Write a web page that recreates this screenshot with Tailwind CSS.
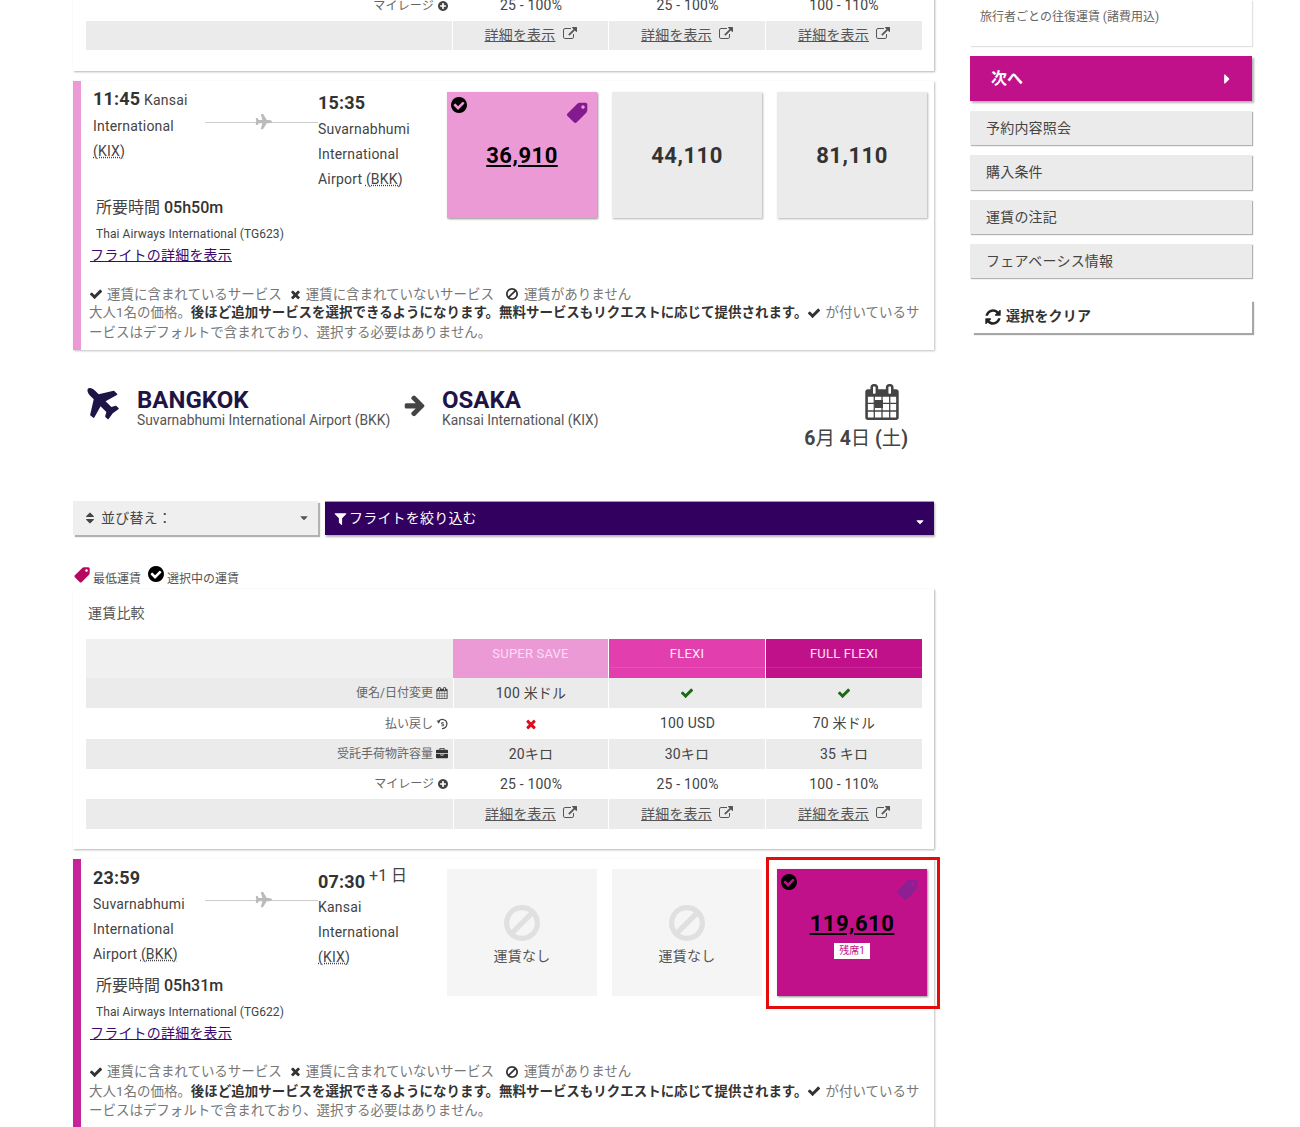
<!DOCTYPE html>
<html lang="ja">
<head>
<meta charset="utf-8">
<script src="https://cdn.jsdelivr.net/npm/@tailwindcss/browser@4"></script>
</head>
<body class="bg-white">
<svg class="hidden">
<defs>
<symbol id="check" viewBox="0 0 1792 1792"><path d="M1671 566q0 40-28 68l-724 724-136 136q-28 28-68 28t-68-28l-136-136-362-362q-28-28-28-68t28-68l136-136q28-28 68-28t68 28l294 295 656-657q28-28 68-28t68 28l136 136q28 28 28 68z"/></symbol>
<symbol id="times" viewBox="0 0 1792 1792"><path d="M1490 1322q0 40-28 68l-136 136q-28 28-68 28t-68-28l-294-294-294 294q-28 28-68 28t-68-28l-136-136q-28-28-28-68t28-68l294-294-294-294q-28-28-28-68t28-68l136-136q28-28 68-28t68 28l294 294 294-294q28-28 68-28t68 28l136 136q28 28 28 68t-28 68l-294 294 294 294q28 28 28 68z"/></symbol>
<symbol id="ban" viewBox="0 0 1792 1792"><path d="M1440 893q0-161-87-295l-754 753q137 89 297 89 111 0 211.5-43.5t173.5-116.5 116-174.5 43-212.5zm-999 299l755-754q-135-91-300-91-148 0-273 73t-198 199-73 274q0 162 89 299zm1223-299q0 157-61 300t-163.5 246-245 164-298.5 61-298.5-61-245-164-163.5-246-61-300 61-299.5 163.5-245.5 245-164 298.5-61 298.5 61 245 164 163.5 245.5 61 299.5z"/></symbol>
<symbol id="ccheck" viewBox="128 128 1536 1536"><path d="M1412 734q0-28-18-46l-91-90q-19-19-45-19t-45 19l-408 407-226-226q-19-19-45-19t-45 19l-91 90q-18 18-18 46 0 27 18 45l362 362q19 19 45 19 27 0 46-19l543-543q18-18 18-45zm252 162q0 209-103 385.5t-279.5 279.5-385.5 103-385.5-103-279.5-279.5-103-385.5 103-385.5 279.5-279.5 385.5-103 385.5 103 279.5 279.5 103 385.5z"/></symbol>
<symbol id="plus" viewBox="128 128 1536 1536"><path d="M1344 960v-128q0-26-19-45t-45-19h-256v-256q0-26-19-45t-45-19h-128q-26 0-45 19t-19 45v256h-256q-26 0-45 19t-19 45v128q0 26 19 45t45 19h256v256q0 26 19 45t45 19h128q26 0 45-19t19-45v-256h256q26 0 45-19t19-45zm320-64q0 209-103 385.5t-279.5 279.5-385.5 103-385.5-103-279.5-279.5-103-385.5 103-385.5 279.5-279.5 385.5-103 385.5 103 279.5 279.5 103 385.5z"/></symbol>
<symbol id="ext" viewBox="0 0 1792 1792"><path d="M1408 928v320q0 119-84.5 203.5t-203.5 84.5h-832q-119 0-203.5-84.5t-84.5-203.5v-832q0-119 84.5-203.5t203.5-84.5h704q14 0 23 9t9 23v64q0 14-9 23t-23 9h-704q-66 0-113 47t-47 113v832q0 66 47 113t113 47h832q66 0 113-47t47-113v-320q0-14 9-23t23-9h64q14 0 23 9t9 23zm384-864v512q0 26-19 45t-45 19-45-19l-176-176-652 652q-10 10-23 10t-23-10l-114-114q-10-10-10-23t10-23l652-652-176-176q-19-19-19-45t19-45 45-19h512q26 0 45 19t19 45z"/></symbol>
<symbol id="plane" viewBox="0 0 1792 1792"><path d="M1568 160q44 52 12 148t-108 172l-161 161 160 696q5 19-12 33l-128 96q-7 6-19 6-4 0-7-1-15-3-21-16l-279-508-259 259 53 194q5 17-8 31l-96 96q-9 9-23 9h-2q-15-2-24-13l-189-252-252-189q-11-7-13-23-1-13 9-25l96-97q9-9 23-9 6 0 8 1l194 53 259-259-508-279q-14-8-17-24-2-16 9-27l128-128q14-13 30-8l665 159 160-160q76-76 172-108t148 12z"/></symbol>
<symbol id="tag" viewBox="0 0 1792 1792"><path d="M576 448q0-53-37.5-90.5t-90.5-37.5-90.5 37.5-37.5 90.5 37.5 90.5 90.5 37.5 90.5-37.5 37.5-90.5zm1067 576q0 53-37 90l-491 492q-39 37-91 37-53 0-90-37l-715-716q-38-37-64.5-101t-26.5-117v-416q0-52 38-90t90-38h416q53 0 117 26.5t102 64.5l715 714q37 39 37 91z"/></symbol>
<symbol id="cal" viewBox="0 0 1792 1792"><path d="M192 1664h288v-288h-288v288zm352 0h320v-288h-320v288zm-352-352h288v-320h-288v320zm352 0h320v-320h-320v320zm-352-384h288v-288h-288v288zm736 736h320v-288h-320v288zm-384-736h320v-288h-320v288zm768 736h288v-288h-288v288zm-384-352h320v-320h-320v320zm-352-864v-288q0-13-9.5-22.5t-22.5-9.5h-64q-13 0-22.5 9.5t-9.5 22.5v288q0 13 9.5 22.5t22.5 9.5h64q13 0 22.5-9.5t9.5-22.5zm736 864h288v-320h-288v320zm-384-384h320v-288h-320v288zm384 0h288v-288h-288v288zm32-480v-288q0-13-9.5-22.5t-22.5-9.5h-64q-13 0-22.5 9.5t-9.5 22.5v288q0 13 9.5 22.5t22.5 9.5h64q13 0 22.5-9.5t9.5-22.5zm384-64v1280q0 52-38 90t-90 38h-1408q-52 0-90-38t-38-90v-1280q0-52 38-90t90-38h128v-96q0-66 47-113t113-47h64q66 0 113 47t47 113v96h384v-96q0-66 47-113t113-47h64q66 0 113 47t47 113v96h128q52 0 90 38t38 90z"/></symbol>
<symbol id="caret" viewBox="0 0 1792 1792"><path d="M1408 704q0 26-19 45l-448 448q-19 19-45 19t-45-19l-448-448q-19-19-19-45t19-45 45-19h896q26 0 45 19t19 45z"/></symbol>
<symbol id="bag" viewBox="0 0 1792 1792"><path d="M640 256h512v-128h-512v128zm1152 640v480q0 66-47 113t-113 47h-1472q-66 0-113-47t-47-113v-480h672v160q0 26 19 45t45 19h320q26 0 45-19t19-45v-160h672zm-768 0v128h-256v-128h256zm768-480v384h-1792v-384q0-66 47-113t113-47h352v-160q0-40 28-68t68-28h576q40 0 68 28t28 68v160h352q66 0 113 47t47 113z"/></symbol>
<symbol id="refund" viewBox="0 0 16 16"><path d="M3.2 5.2A6 6 0 1 1 8 14" fill="none" stroke="currentColor" stroke-width="1.6"/><path d="M0.8 3.4l5 .2-2.2 4.2z"/><path d="M10.2 6.2H7.6v2h2.6v2.2H7.2" fill="none" stroke="currentColor" stroke-width="1.2"/></symbol>
</defs>
</svg>

<div class="flex items-start h-[1127px] overflow-hidden pl-[73px] text-[#444] text-[14px] font-['Roboto','Noto_Sans_CJK_JP',sans-serif] tracking-[0.2px]">

<main class="w-[861px] shrink-0">

  <section class="mt-[-10px] h-[81px] bg-white shadow-[1px_1px_2px_rgba(0,0,0,0.3)] pl-[13px] pr-[12px]">
    <div class="grid grid-cols-[367px_156px_157px_156px] h-[31px] items-center text-center">
      <div class="flex justify-end items-center gap-[4px] pr-[5px] text-[12px] text-[#666]">マイレージ<svg class="size-[10px] fill-[#444]"><use href="#plus"/></svg></div>
      <div>25 - 100%</div><div>25 - 100%</div><div class="tracking-[0.1px]">100 - 110%</div>
    </div>
    <div class="grid grid-cols-[367px_156px_157px_156px] h-[29px] text-center">
      <div class="bg-[#ebebeb] border-r border-white"></div>
      <div class="bg-[#ebebeb] border-r border-white flex justify-center items-center gap-[7px]"><span class="underline text-[#555]">詳細を表示</span><svg class="size-[14px] fill-[#555] mt-[-3px]"><use href="#ext"/></svg></div>
      <div class="bg-[#ebebeb] border-r border-white flex justify-center items-center gap-[7px]"><span class="underline text-[#555]">詳細を表示</span><svg class="size-[14px] fill-[#555] mt-[-3px]"><use href="#ext"/></svg></div>
      <div class="bg-[#ebebeb] flex justify-center items-center gap-[7px]"><span class="underline text-[#555]">詳細を表示</span><svg class="size-[14px] fill-[#555] mt-[-3px]"><use href="#ext"/></svg></div>
    </div>
  </section>

  <section class="mt-[10px] h-[269px] bg-white border-l-[8px] border-[#ec9ad6] shadow-[1px_1px_2px_rgba(0,0,0,0.25)]">
    <div class="flex h-[203px]">
      <div class="w-[366px] shrink-0 pl-[12px]">
        <div class="flex h-[113px]">
          <div class="w-[112px] pt-[4px] leading-[25px] shrink-0">
            <div class="h-[29px] leading-[27px]"><b class="text-[18px] text-[#333]">11:45</b> Kansai</div>
            <div>International</div>
            <div><span class="underline decoration-dotted">(KIX)</span></div>
          </div>
          <div class="relative w-[113px] h-[1px] mt-[41px] bg-[#ccc] shrink-0"><svg class="absolute left-[48px] top-[-9px] size-[18px] fill-[#bbb] rotate-45"><use href="#plane"/></svg></div>
          <div class="pt-[8px] leading-[25px] w-[125px]">
            <div class="h-[28px] leading-[27px]"><b class="text-[18px] text-[#333]">15:35</b></div>
            <div>Suvarnabhumi</div>
            <div>International</div>
            <div>Airport <span class="underline decoration-dotted">(BKK)</span></div>
          </div>
        </div>
        <div class="pl-[3px] h-[27px] leading-[28px] text-[16px] tracking-normal">所要時間 <b class="font-medium text-[#333]">05h50m</b></div>
        <div class="pl-[3px] h-[26px] leading-[26px] text-[12px] tracking-[0.08px]">Thai Airways International (TG623)</div>
        <a class="block ml-[-3px] text-[14px] leading-[16px] underline text-[#3b0a70]">フライトの詳細を表示</a>
      </div>
      <div class="flex gap-[15px] pt-[11px] items-start">
        <div class="relative w-[150px] h-[126px] bg-[#ec9ad6] shadow-[1px_1px_2px_rgba(0,0,0,0.45)] flex items-center justify-center">
          <svg class="absolute left-[4px] top-[5px] size-[16px] fill-black"><use href="#ccheck"/></svg>
          <svg class="absolute right-[8px] top-[9px] size-[24px] fill-[#831a8e] -scale-x-100"><use href="#tag"/></svg>
          <span class="text-[22px] font-bold underline text-black tracking-[0.5px]">36,910</span>
        </div>
        <div class="w-[150px] h-[126px] bg-[#ebebeb] shadow-[1px_1px_2px_rgba(0,0,0,0.3)] flex items-center justify-center"><span class="text-[22px] font-bold text-[#333] tracking-[0.5px]">44,110</span></div>
        <div class="w-[150px] h-[126px] bg-[#ebebeb] shadow-[1px_1px_2px_rgba(0,0,0,0.3)] flex items-center justify-center"><span class="text-[22px] font-bold text-[#333] tracking-[0.5px]">81,110</span></div>
      </div>
    </div>
    <div class="pl-[8px] pt-[1px] text-[13.48px] tracking-normal text-[#777] whitespace-nowrap">
      <div class="flex items-center h-[18px]"><svg class="size-[14px] fill-[#333] mr-[4px]"><use href="#check"/></svg>運賃に含まれているサービス<svg class="size-[13px] fill-[#333] ml-[7px] mr-[4px]"><use href="#times"/></svg>運賃に含まれていないサービス<svg class="size-[14px] fill-[#333] ml-[11px] mr-[5px]"><use href="#ban"/></svg>運賃がありません</div>
      <div class="flex items-center h-[19px]">大人1名の価格。<b class="text-[#333]">後ほど追加サービスを選択できるようになります。無料サービスもリクエストに応じて提供されます。</b><svg class="size-[14px] fill-[#333] mr-[4px]"><use href="#check"/></svg>が付いているサ</div>
      <div class="flex items-center h-[20px]">ービスはデフォルトで含まれており、選択する必要はありません。</div>
    </div>
  </section>

  <div class="flex h-[151px] pl-[10px] pt-[35px]">
    <svg class="size-[40px] fill-[#1e1446] -scale-x-100 shrink-0"><use href="#plane"/></svg>
    <div class="ml-[14px] w-[268px] shrink-0 pt-[3px]">
      <div class="text-[24px] font-bold leading-[24px] text-[#1e1446] tracking-normal">BANGKOK</div>
      <div class="leading-[14px] text-[13.8px] text-[#555] tracking-normal mt-[1px]">Suvarnabhumi International Airport (BKK)</div>
    </div>
    <svg class="size-[24px] fill-[#444] mt-[8px] ml-[-2px] shrink-0"><path transform="scale(.01339)" d="M1600 960q0 54-37 91l-651 651q-39 37-91 37-51 0-90-37l-75-75q-38-38-38-91t38-91l293-293h-704q-52 0-84.5-37.5t-32.5-90.5v-128q0-53 32.5-90.5t84.5-37.5h704l-293-294q-38-36-38-90t38-90l75-75q38-38 90-38 53 0 91 38l651 651q37 35 37 90z"/></svg>
    <div class="ml-[15px] shrink-0 pt-[3px]">
      <div class="text-[24px] font-bold leading-[24px] text-[#1e1446] tracking-normal">OSAKA</div>
      <div class="leading-[14px] text-[13.8px] text-[#555] tracking-normal mt-[1px]">Kansai International (KIX)</div>
    </div>
    <div class="ml-auto mr-[26px] flex flex-col items-end mt-[-1px]">
      <div class="relative size-[36px] mr-[8px]"><svg class="size-[36px] fill-[#444]"><use href="#cal"/></svg><span class="absolute left-[11px] top-[16px] w-[8px] h-[8px] bg-[#444]"></span></div>
      <div class="text-[19.4px] font-bold leading-[28px] mt-[5px] whitespace-nowrap tracking-normal">6<span class="font-normal">月</span> 4<span class="font-normal">日</span> (<span class="font-normal">土</span>)</div>
    </div>
  </div>

  <div class="flex h-[34px] gap-[7px]">
    <div class="w-[245px] bg-[#efefef] shadow-[2px_2px_1px_rgba(0,0,0,0.3)] flex items-center pl-[10px] pr-[8px]">
      <svg class="size-[14px] fill-[#444] mr-[4px]" viewBox="0 0 1792 1792"><path d="M1408 1088q0 26-19 45l-448 448q-19 19-45 19t-45-19l-448-448q-19-19-19-45t19-45 45-19h896q26 0 45 19t19 45zm0-384q0 26-19 45t-45 19h-896q-26 0-45-19t-19-45 19-45l448-448q19-19 45-19t45 19l448 448q19 19 19 45z"/></svg>
      <span class="flex-1">並び替え：</span>
      <svg class="size-[12px] fill-[#555]"><use href="#caret"/></svg>
    </div>
    <div class="w-[609px] bg-[#32005f] border-t border-[#a98ec4] shadow-[1px_2px_2px_rgba(0,0,0,0.3)] flex items-center pl-[8px] pr-[8px] text-white">
      <svg class="size-[15px] fill-white mr-[1px]" viewBox="0 0 1792 1792"><path d="M1595 295q17 41-14 70l-493 493v742q0 42-39 59-13 5-25 5-27 0-45-19l-256-256q-19-19-19-45v-486l-493-493q-31-29-14-70 17-39 59-39h1280q42 0 59 39z"/></svg>
      <span class="flex-1">フライトを絞り込む</span>
      <svg class="size-[12px] fill-white mt-[6px]"><use href="#caret"/></svg>
    </div>
  </div>

  <div class="h-[54px] pt-[31px] flex items-start text-[12px] text-[#555] tracking-normal">
    <svg class="size-[18px] fill-[#b5085f] -scale-x-100 shrink-0"><use href="#tag"/></svg>
    <span class="mt-[4px] ml-[2px]">最低運賃</span>
    <svg class="size-[16px] fill-black ml-[7px] shrink-0"><use href="#ccheck"/></svg>
    <span class="mt-[4px] ml-[3px]">選択中の運賃</span>
  </div>

  <section class="h-[260px] bg-white shadow-[1px_1px_2px_rgba(0,0,0,0.3)] pl-[13px] pr-[12px]">
    <div class="h-[50px] pt-[13px] pl-[2px] leading-[22px] text-[#555]">運賃比較</div>
    <div class="grid grid-cols-[367px_156px_157px_156px] grid-rows-[39px_30px_31px_30px_30px_30px] text-center">
      <div class="bg-[#f0f0f0]"></div>
      <div class="bg-[#ec9ad6] border-r border-white text-white/70 text-[13px]"><div class="h-[29px] pt-[7px] leading-[16px]">SUPER SAVE</div></div>
      <div class="bg-[#e23eae] border-r border-white text-white/90 text-[13px]"><div class="h-[29px] pt-[7px] leading-[16px] border-b border-white/10">FLEXI</div></div>
      <div class="bg-[#c1118a] text-white/90 text-[13px]"><div class="h-[29px] pt-[7px] leading-[16px] border-b border-white/10">FULL FLEXI</div></div>

      <div class="bg-[#ebebeb] flex justify-end items-center gap-[3px] pr-[5px] text-[12px] text-[#666] tracking-normal">便名/日付変更<svg class="size-[12px] fill-[#444]"><use href="#cal"/></svg></div>
      <div class="bg-[#ebebeb] border-x border-white flex items-center justify-center">100 米ドル</div>
      <div class="bg-[#ebebeb] border-r border-white flex items-center justify-center"><svg class="size-[14px] fill-[#1b6b16]"><use href="#check"/></svg></div>
      <div class="bg-[#ebebeb] flex items-center justify-center"><svg class="size-[14px] fill-[#1b6b16]"><use href="#check"/></svg></div>

      <div class="flex justify-end items-center gap-[3px] pr-[5px] text-[12px] text-[#666] tracking-normal">払い戻し<svg class="size-[12px] fill-[#444] text-[#444]"><use href="#refund"/></svg></div>
      <div class="flex items-center justify-center"><svg class="size-[14px] fill-[#e00b1c]"><use href="#times"/></svg></div>
      <div class="flex items-center justify-center">100 USD</div>
      <div class="flex items-center justify-center">70 米ドル</div>

      <div class="bg-[#ebebeb] flex justify-end items-center gap-[3px] pr-[5px] text-[12px] text-[#666] tracking-normal">受託手荷物許容量<svg class="size-[12px] fill-[#333]"><use href="#bag"/></svg></div>
      <div class="bg-[#ebebeb] border-x border-white flex items-center justify-center">20キロ</div>
      <div class="bg-[#ebebeb] border-r border-white flex items-center justify-center">30キロ</div>
      <div class="bg-[#ebebeb] flex items-center justify-center">35 キロ</div>

      <div class="flex justify-end items-center gap-[4px] pr-[5px] text-[12px] text-[#666] tracking-normal">マイレージ<svg class="size-[10px] fill-[#444]"><use href="#plus"/></svg></div>
      <div class="flex items-center justify-center">25 - 100%</div>
      <div class="flex items-center justify-center">25 - 100%</div>
      <div class="flex items-center justify-center tracking-[0.1px]">100 - 110%</div>

      <div class="bg-[#ebebeb]"></div>
      <div class="bg-[#ebebeb] border-x border-white flex justify-center items-center gap-[7px]"><span class="underline text-[#555]">詳細を表示</span><svg class="size-[14px] fill-[#555] mt-[-3px]"><use href="#ext"/></svg></div>
      <div class="bg-[#ebebeb] border-r border-white flex justify-center items-center gap-[7px]"><span class="underline text-[#555]">詳細を表示</span><svg class="size-[14px] fill-[#555] mt-[-3px]"><use href="#ext"/></svg></div>
      <div class="bg-[#ebebeb] flex justify-center items-center gap-[7px]"><span class="underline text-[#555]">詳細を表示</span><svg class="size-[14px] fill-[#555] mt-[-3px]"><use href="#ext"/></svg></div>
    </div>
  </section>

  <section class="mt-[10px] h-[269px] bg-white border-l-[8px] border-[#c6249b] shadow-[1px_1px_2px_rgba(0,0,0,0.25)]">
    <div class="flex h-[202px]">
      <div class="w-[366px] shrink-0 pl-[12px]">
        <div class="flex h-[113px]">
          <div class="w-[112px] pt-[5px] leading-[25px] shrink-0">
            <div class="h-[28px] leading-[27px]"><b class="text-[18px] text-[#333]">23:59</b></div>
            <div>Suvarnabhumi</div>
            <div>International</div>
            <div>Airport <span class="underline decoration-dotted">(BKK)</span></div>
          </div>
          <div class="relative w-[113px] h-[1px] mt-[41px] bg-[#ccc] shrink-0"><svg class="absolute left-[48px] top-[-9px] size-[18px] fill-[#bbb] rotate-45"><use href="#plane"/></svg></div>
          <div class="pt-[9px] leading-[25px] w-[125px]">
            <div class="h-[27px] leading-[27px] whitespace-nowrap"><b class="text-[18px] text-[#333]">07:30</b> <span class="text-[16px] relative top-[-7px] tracking-normal">+1 日</span></div>
            <div>Kansai</div>
            <div>International</div>
            <div><span class="underline decoration-dotted">(KIX)</span></div>
          </div>
        </div>
        <div class="pl-[3px] h-[27px] leading-[28px] text-[16px] tracking-normal">所要時間 <b class="font-medium text-[#333]">05h31m</b></div>
        <div class="pl-[3px] h-[26px] leading-[26px] text-[12px] tracking-[0.08px]">Thai Airways International (TG622)</div>
        <a class="block ml-[-3px] text-[14px] leading-[16px] underline text-[#3b0a70]">フライトの詳細を表示</a>
      </div>
      <div class="flex gap-[15px] pt-[10px] items-start">
        <div class="w-[150px] h-[127px] bg-[#f5f5f5] flex flex-col items-center pt-[33px]">
          <svg class="size-[42px] fill-[#e0e0e0]"><use href="#ban"/></svg>
          <span class="text-[#555] mt-[2px] leading-[20px]">運賃なし</span>
        </div>
        <div class="w-[150px] h-[127px] bg-[#f5f5f5] flex flex-col items-center pt-[33px]">
          <svg class="size-[42px] fill-[#e0e0e0]"><use href="#ban"/></svg>
          <span class="text-[#555] mt-[2px] leading-[20px]">運賃なし</span>
        </div>
        <div class="relative w-[150px] h-[127px] bg-[#c1118a] shadow-[1px_1px_2px_rgba(0,0,0,0.45)] flex flex-col items-center pt-[41px]">
          <span class="absolute left-[-11px] right-[-13px] top-[-12px] bottom-[-13px] border-[3px] border-[#e60a0a] pointer-events-none"></span>
          <svg class="absolute left-[4px] top-[5px] size-[16px] fill-black"><use href="#ccheck"/></svg>
          <svg class="absolute right-[8px] top-[9px] size-[24px] fill-[#8c2093] -scale-x-100"><use href="#tag"/></svg>
          <span class="text-[22px] font-bold underline text-black leading-[28px] tracking-[0.5px]">119,610</span>
          <span class="bg-white text-[#c1118a] text-[10px] leading-[16px] px-[5px] mt-[5px] tracking-normal">残席1</span>
        </div>
      </div>
    </div>
    <div class="pl-[8px] pt-[1px] text-[13.48px] tracking-normal text-[#777] whitespace-nowrap">
      <div class="flex items-center h-[19px]"><svg class="size-[14px] fill-[#333] mr-[4px]"><use href="#check"/></svg>運賃に含まれているサービス<svg class="size-[13px] fill-[#333] ml-[7px] mr-[4px]"><use href="#times"/></svg>運賃に含まれていないサービス<svg class="size-[14px] fill-[#333] ml-[11px] mr-[5px]"><use href="#ban"/></svg>運賃がありません</div>
      <div class="flex items-center h-[20px]">大人1名の価格。<b class="text-[#333]">後ほど追加サービスを選択できるようになります。無料サービスもリクエストに応じて提供されます。</b><svg class="size-[14px] fill-[#333] mr-[4px]"><use href="#check"/></svg>が付いているサ</div>
      <div class="flex items-center h-[18px]">ービスはデフォルトで含まれており、選択する必要はありません。</div>
    </div>
  </section>
</main>

<aside class="ml-[36px] w-[283px] shrink-0">
  <div class="h-[46px] pt-[9px] pl-[10px] bg-white shadow-[1px_1px_1px_rgba(0,0,0,0.12)] text-[12px] leading-[16px] text-[#666] tracking-normal mr-[1px]">旅行者ごとの往復運賃 (諸費用込)</div>
  <div class="mt-[10px] mr-[1px] h-[45px] bg-[#c1118a] shadow-[2px_2px_2px_rgba(0,0,0,0.3)] flex items-center justify-between pl-[21px] pr-[17px] text-white text-[16px] font-bold tracking-normal"><span>次へ</span><svg class="size-[16px] fill-white" viewBox="0 0 1792 1792"><path d="M1152 896q0 26-19 45l-448 448q-19 19-45 19t-45-19-19-45v-896q0-26 19-45t45-19 45 19l448 448q19 19 19 45z"/></svg></div>
  <div class="mt-[10px] mr-[1px] h-[34px] bg-[#ebebeb] shadow-[1px_1px_1px_rgba(0,0,0,0.3)] flex items-center pl-[16px]">予約内容照会</div>
  <div class="mt-[10px] mr-[1px] h-[35px] bg-[#ebebeb] shadow-[1px_1px_1px_rgba(0,0,0,0.3)] flex items-center pl-[16px]">購入条件</div>
  <div class="mt-[10px] mr-[1px] h-[34px] bg-[#ebebeb] shadow-[1px_1px_1px_rgba(0,0,0,0.3)] flex items-center pl-[16px]">運賃の注記</div>
  <div class="mt-[10px] mr-[1px] h-[34px] bg-[#ebebeb] shadow-[1px_1px_1px_rgba(0,0,0,0.3)] flex items-center pl-[16px]">フェアベーシス情報</div>
  <div class="mt-[22px] ml-[2px] mr-[1px] h-[33px] bg-white shadow-[2px_2px_1px_rgba(0,0,0,0.35)] flex items-center pl-[12px] font-bold text-[#333]"><svg class="size-[18px] fill-[#222] mr-[4px]" viewBox="0 0 1792 1792"><path d="M1639 1056q0 5-1 7-64 268-268 434.5t-478 166.5q-146 0-282.5-55t-243.5-157l-129 129q-19 19-45 19t-45-19-19-45v-448q0-26 19-45t45-19h448q26 0 45 19t19 45-19 45l-137 137q71 66 161 102t187 36q134 0 250-65t186-179q11-17 53-117 8-23 30-23h192q13 0 22.5 9.5t9.5 22.5zm25-800v448q0 26-19 45t-45 19h-448q-26 0-45-19t-19-45 19-45l138-138q-148-137-349-137-134 0-250 65t-186 179q-11 17-53 117-8 23-30 23h-199q-13 0-22.5-9.5t-9.5-22.5v-7q65-268 270-434.5t480-166.5q146 0 284 55.5t245 156.5l130-129q19-19 45-19t45 19 19 45z"/></svg>選択をクリア</div>
</aside>
</div>
</body>
</html>
